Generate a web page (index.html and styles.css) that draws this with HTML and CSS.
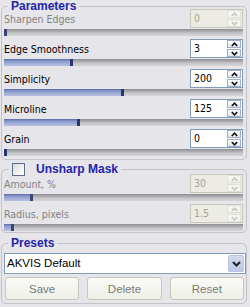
FILE: index.html
```html
<!DOCTYPE html>
<html lang="en">
<head>
    <meta charset="UTF-8">
    <title>Sketch Parameters</title>
    <link rel="stylesheet" href="styles.css">
</head>
<body>
    <!-- Parameters -->
    <fieldset class="group">
        <legend class="group-title">Parameters</legend>
        <div class="group-body">
            <div class="param disabled">
                <div class="param-head">
                    <span class="param-label">Sharpen Edges</span>
                    <div class="spin">
                        <span class="spin-value">0</span>
                        <span class="spin-btns">
                            <span class="spin-btn"><svg width="7" height="5" viewBox="0 0 7 5"><polyline points="0.8,4 3.5,1.2 6.2,4"/></svg></span>
                            <span class="spin-btn"><svg width="7" height="5" viewBox="0 0 7 5"><polyline points="0.8,1 3.5,3.8 6.2,1"/></svg></span>
                        </span>
                    </div>
                </div>
                <div class="track"><div class="fill" style="width:3px"></div></div>
            </div>
            <div class="param">
                <div class="param-head">
                    <span class="param-label">Edge Smoothness</span>
                    <div class="spin">
                        <span class="spin-value">3</span>
                        <span class="spin-btns">
                            <span class="spin-btn"><svg width="7" height="5" viewBox="0 0 7 5"><polyline points="0.8,4 3.5,1.2 6.2,4"/></svg></span>
                            <span class="spin-btn"><svg width="7" height="5" viewBox="0 0 7 5"><polyline points="0.8,1 3.5,3.8 6.2,1"/></svg></span>
                        </span>
                    </div>
                </div>
                <div class="track"><div class="fill" style="width:69px"></div></div>
            </div>
            <div class="param">
                <div class="param-head">
                    <span class="param-label">Simplicity</span>
                    <div class="spin">
                        <span class="spin-value">200</span>
                        <span class="spin-btns">
                            <span class="spin-btn"><svg width="7" height="5" viewBox="0 0 7 5"><polyline points="0.8,4 3.5,1.2 6.2,4"/></svg></span>
                            <span class="spin-btn"><svg width="7" height="5" viewBox="0 0 7 5"><polyline points="0.8,1 3.5,3.8 6.2,1"/></svg></span>
                        </span>
                    </div>
                </div>
                <div class="track"><div class="fill" style="width:120px"></div></div>
            </div>
            <div class="param">
                <div class="param-head">
                    <span class="param-label">Microline</span>
                    <div class="spin">
                        <span class="spin-value">125</span>
                        <span class="spin-btns">
                            <span class="spin-btn"><svg width="7" height="5" viewBox="0 0 7 5"><polyline points="0.8,4 3.5,1.2 6.2,4"/></svg></span>
                            <span class="spin-btn"><svg width="7" height="5" viewBox="0 0 7 5"><polyline points="0.8,1 3.5,3.8 6.2,1"/></svg></span>
                        </span>
                    </div>
                </div>
                <div class="track"><div class="fill" style="width:76px"></div></div>
            </div>
            <div class="param">
                <div class="param-head">
                    <span class="param-label">Grain</span>
                    <div class="spin">
                        <span class="spin-value">0</span>
                        <span class="spin-btns">
                            <span class="spin-btn"><svg width="7" height="5" viewBox="0 0 7 5"><polyline points="0.8,4 3.5,1.2 6.2,4"/></svg></span>
                            <span class="spin-btn"><svg width="7" height="5" viewBox="0 0 7 5"><polyline points="0.8,1 3.5,3.8 6.2,1"/></svg></span>
                        </span>
                    </div>
                </div>
                <div class="track"><div class="fill" style="width:3px"></div></div>
            </div>
        </div>
    </fieldset>

    <!-- Unsharp Mask -->
    <fieldset class="group group-unsharp">
        <legend class="group-title"><input type="checkbox" class="check">Unsharp Mask</legend>
        <div class="group-body">
            <div class="param disabled">
                <div class="param-head">
                    <span class="param-label">Amount, %</span>
                    <div class="spin">
                        <span class="spin-value">30</span>
                        <span class="spin-btns">
                            <span class="spin-btn"><svg width="7" height="5" viewBox="0 0 7 5"><polyline points="0.8,4 3.5,1.2 6.2,4"/></svg></span>
                            <span class="spin-btn"><svg width="7" height="5" viewBox="0 0 7 5"><polyline points="0.8,1 3.5,3.8 6.2,1"/></svg></span>
                        </span>
                    </div>
                </div>
                <div class="track"><div class="fill" style="width:29px"></div></div>
            </div>
            <div class="param disabled">
                <div class="param-head">
                    <span class="param-label">Radius, pixels</span>
                    <div class="spin">
                        <span class="spin-value">1.5</span>
                        <span class="spin-btns">
                            <span class="spin-btn"><svg width="7" height="5" viewBox="0 0 7 5"><polyline points="0.8,4 3.5,1.2 6.2,4"/></svg></span>
                            <span class="spin-btn"><svg width="7" height="5" viewBox="0 0 7 5"><polyline points="0.8,1 3.5,3.8 6.2,1"/></svg></span>
                        </span>
                    </div>
                </div>
                <div class="track"><div class="fill" style="width:10px"></div></div>
            </div>
        </div>
    </fieldset>

    <!-- Presets -->
    <fieldset class="group group-presets">
        <legend class="group-title">Presets</legend>
        <div class="select">
            <span class="select-value">AKVIS Default</span>
            <span class="select-btn"><svg width="9" height="6" viewBox="0 0 9 6"><polyline points="1,1 4.5,4.5 8,1"/></svg></span>
        </div>
        <div class="buttons">
            <button class="btn">Save</button>
            <button class="btn">Delete</button>
            <button class="btn">Reset</button>
        </div>
    </fieldset>
</body>
</html>
```

FILE: styles.css
```css
* {
    margin: 0;
    padding: 0;
    box-sizing: border-box;
}

body {
    background: #e5e5ea;
    font-family: "DejaVu Sans Condensed", "Liberation Sans", sans-serif;
    font-size: 10.5px;
    color: #000;
    width: 250px;
    height: 307px;
    overflow: hidden;
}

.group {
    border: 1px solid #c3c3c8;
    border-radius: 5px;
    margin: 0 3px 0 1px;
    padding: 0 3px 0 2px;
}

.group-title {
    margin-left: 4px;
    padding: 0 3px;
    font: bold 12px/12px "Liberation Sans", sans-serif;
    color: #2424a8;
}

.group-body {
    margin-top: -3px;
}

.param-head {
    display: flex;
    align-items: center;
    justify-content: space-between;
    height: 19px;
}

.param.disabled .param-label {
    color: #838383;
}

.spin {
    display: flex;
    width: 53px;
    height: 19px;
    border: 1px solid #7f9db9;
    background: #fff;
}

.spin-value {
    flex: 1;
    padding-left: 3px;
    line-height: 17px;
}

.spin-btns {
    display: flex;
    flex-direction: column;
    gap: 1px;
    width: 15px;
    padding: 0 1px 0 0;
}

.spin-btn {
    flex: 1;
    display: flex;
    align-items: center;
    justify-content: center;
    border: 1px solid #a4acc0;
    background: linear-gradient(#fdfdfd, #e4e6ee);
}

.spin-btn svg polyline {
    fill: none;
    stroke: #101010;
    stroke-width: 1.6;
}

.param.disabled .spin {
    background: #ecece5;
    border-color: #c9c7ba;
}

.param.disabled .spin-value {
    color: #a3a39c;
}

.param.disabled .spin-btn {
    border-color: #e0e0da;
    background: #f4f4f0;
}

.param.disabled .spin-btn svg polyline {
    stroke: #c6c6c0;
}

.track {
    height: 7px;
    margin: 1px 0 3px;
    background: linear-gradient(#8f8f93 0, #a6a6aa 2px, #c4c4c8 4px, #d6d6da 7px);
}

.fill {
    height: 100%;
    border-right: 3px solid #27356e;
    background: linear-gradient(#5d6ca6 0, #8696c8 2px, #a6b2da 5px, #b6c0e2 7px);
}

.param.disabled .fill {
    border-right-color: #3b4670;
}

/* Unsharp Mask */
.group-unsharp {
    margin-top: 3px;
}

.group-unsharp .group-title {
    display: flex;
    align-items: center;
    gap: 11px;
    line-height: 13px;
    margin-left: 5px;
}

.group-unsharp .group-body {
    margin-top: -2px;
}

.group-unsharp .param:last-child .track {
    margin-bottom: 1px;
}

.check {
    appearance: none;
    width: 13px;
    height: 13px;
    border: 1px solid #5d6e8e;
    background: linear-gradient(135deg, #d8d8d2, #f6f6f4 70%, #fff);
}

/* Presets */
.group-presets {
    margin-top: 4px;
    padding: 4px 0 3px 2px;
}

.select {
    display: flex;
    height: 21px;
    border: 1px solid #7f9db9;
    background: #fff;
}

.select-value {
    flex: 1;
    padding-left: 2px;
    line-height: 19px;
    font-family: "Liberation Sans", sans-serif;
    font-size: 11.5px;
}

.select-btn {
    width: 16px;
    margin: 1px;
    display: flex;
    align-items: center;
    justify-content: center;
    border: 1px solid #b9c3e2;
    border-radius: 2px;
    background: linear-gradient(#d4dbef, #bcc6e6);
}

.select-btn svg polyline {
    fill: none;
    stroke: #202020;
    stroke-width: 2;
}

.buttons {
    display: grid;
    grid-template-columns: repeat(3, 1fr);
    gap: 8px;
    margin: 3px 2px 0 1px;
}

.btn {
    height: 23px;
    border: 1px solid #c9c7ba;
    border-radius: 3px;
    background: linear-gradient(#fafaf7, #efefe9);
    color: #7a7a74;
    font-family: "Liberation Sans", sans-serif;
    font-size: 11.5px;
}
```
